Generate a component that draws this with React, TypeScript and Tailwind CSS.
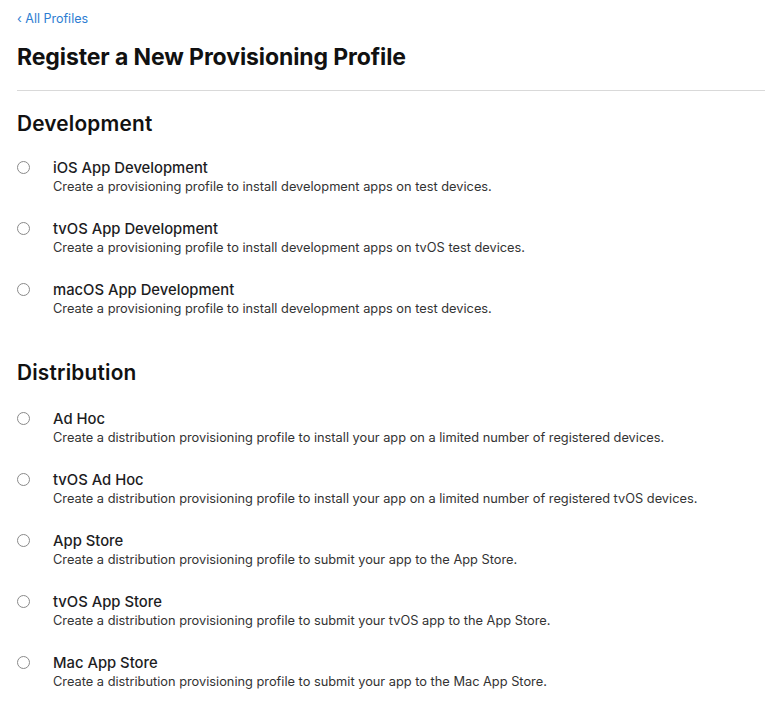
import { FC } from "react";

type Option = {
  title: string;
  desc: string;
};

const development: Option[] = [
  {
    title: "iOS App Development",
    desc: "Create a provisioning profile to install development apps on test devices.",
  },
  {
    title: "tvOS App Development",
    desc: "Create a provisioning profile to install development apps on tvOS test devices.",
  },
  {
    title: "macOS App Development",
    desc: "Create a provisioning profile to install development apps on test devices.",
  },
];

const distribution: Option[] = [
  {
    title: "Ad Hoc",
    desc: "Create a distribution provisioning profile to install your app on a limited number of registered devices.",
  },
  {
    title: "tvOS Ad Hoc",
    desc: "Create a distribution provisioning profile to install your app on a limited number of registered tvOS devices.",
  },
  {
    title: "App Store",
    desc: "Create a distribution provisioning profile to submit your app to the App Store.",
  },
  {
    title: "tvOS App Store",
    desc: "Create a distribution provisioning profile to submit your tvOS app to the App Store.",
  },
  {
    title: "Mac App Store",
    desc: "Create a distribution provisioning profile to submit your app to the Mac App Store.",
  },
];

const Row: FC<{ option: Option }> = ({ option }) => (
  <label className="flex flex-row items-start h-[61px] cursor-pointer">
    <span className="mt-[3px] w-[13px] h-[13px] rounded-full border border-[#8a8a8a] bg-white shrink-0" />
    <div className="ml-[23px] flex flex-col">
      <span className="text-[14.8px] leading-[20px] font-medium text-[#1d1d1f]">
        {option.title}
      </span>
      <span className="text-[12.8px] leading-[18px] text-[#333]">
        {option.desc}
      </span>
    </div>
  </label>
);

const Section: FC<{ title: string; options: Option[]; gap: string }> = ({
  title,
  options,
  gap,
}) => (
  <section className="flex flex-col">
    <h2 className="text-[20.8px] leading-[26px] font-semibold text-[#111] tracking-[0.2px]">
      {title}
    </h2>
    <div className={`${gap} flex flex-col`}>
      {options.map((o) => (
        <Row key={o.title} option={o} />
      ))}
    </div>
  </section>
);

export default function App() {
  return (
    <div
      className="min-h-screen bg-white pl-[17px] pt-[10px]"
      style={{ fontFamily: "Inter, 'Noto Sans', sans-serif" }}
    >
      <a href="#" className="block text-[12.5px] leading-[17px] text-[#2d7dd2]">
        ‹ All Profiles
      </a>
      <h1 className="mt-[16px] text-[23px] leading-[28px] font-bold text-[#111] tracking-[-0.1px]">
        Register a New Provisioning Profile
      </h1>
      <div className="mt-[19px] h-px bg-[#d9d9d9]" />
      <div className="mt-[20px] flex flex-col gap-[19px]">
        <Section title="Development" options={development} gap="mt-[21px]" />
        <Section title="Distribution" options={distribution} gap="mt-[23px]" />
      </div>
    </div>
  );
}
